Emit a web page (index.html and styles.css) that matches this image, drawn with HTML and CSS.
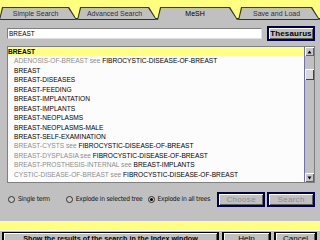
FILE: index.html
```html
<!DOCTYPE html>
<html lang="en">
<head>
  <meta charset="UTF-8">
  <title>MeSH</title>
  <link rel="stylesheet" href="styles.css">
</head>
<body>
  <div class="tabbar">
    <div class="tab t1"><div class="face">Simple Search</div></div>
    <div class="tab t2"><div class="face">Advanced Search</div></div>
    <div class="tab t3 active"><div class="face">MeSH</div></div>
    <div class="tab t4"><div class="face">Save and Load</div></div>
  </div>

  <div class="panel">
    <div class="query">
      <div class="field">BREAST</div>
      <button class="btn thes">Thesaurus</button>
    </div>

    <div class="listbox">
      <div class="rows">
        <div class="row hit">BREAST</div>
        <div class="row"><span class="dim">ADENOSIS-OF-BREAST see</span> FIBROCYSTIC-DISEASE-OF-BREAST</div>
        <div class="row">BREAST</div>
        <div class="row">BREAST-DISEASES</div>
        <div class="row">BREAST-FEEDING</div>
        <div class="row">BREAST-IMPLANTATION</div>
        <div class="row">BREAST-IMPLANTS</div>
        <div class="row">BREAST-NEOPLASMS</div>
        <div class="row">BREAST-NEOPLASMS-MALE</div>
        <div class="row">BREAST-SELF-EXAMINATION</div>
        <div class="row"><span class="dim">BREAST-CYSTS see</span> FIBROCYSTIC-DISEASE-OF-BREAST</div>
        <div class="row"><span class="dim">BREAST-DYSPLASIA see</span> FIBROCYSTIC-DISEASE-OF-BREAST</div>
        <div class="row"><span class="dim">BREAST-PROSTHESIS-INTERNAL see</span> BREAST-IMPLANTS</div>
        <div class="row"><span class="dim">CYSTIC-DISEASE-OF-BREAST see</span> FIBROCYSTIC-DISEASE-OF-BREAST</div>
      </div>
      <div class="scroll">
        <div class="arrow"><svg width="5" height="4" viewBox="0 0 5 4"><path d="M2.5 0.5 L4.5 3.5 L0.5 3.5 Z" fill="#000"/></svg></div>
        <div class="track"><div class="thumb"></div></div>
        <div class="arrow"><svg width="5" height="4" viewBox="0 0 5 4"><path d="M0.5 0.5 L4.5 0.5 L2.5 3.5 Z" fill="#000"/></svg></div>
      </div>
    </div>

    <div class="options">
      <label class="opt o1"><span class="radio"></span>Single term</label>
      <label class="opt o2"><span class="radio"></span>Explode in selected tree</label>
      <label class="opt o3"><span class="radio on"></span>Explode in all trees</label>
      <button class="btn off choose">Choose</button>
      <button class="btn off">Search</button>
    </div>
  </div>

  <div class="status"></div>

  <div class="footer">
    <button class="btn wide">Show the results of the search in the Index window</button>
    <button class="btn help">Help</button>
    <button class="btn cancel">Cancel</button>
  </div>
</body>
</html>
```

FILE: styles.css
```css
* {
  box-sizing: border-box;
}

body {
  margin: 0;
  width: 320px;
  height: 240px;
  overflow: hidden;
  background: #c0c0c0;
  font-family: 'Liberation Sans', Arial, sans-serif;
  color: #000;
}

/* tab strip */
.tabbar {
  display: flex;
  height: 19px;
  padding-top: 7px;
  background: #ffff80;
  border-bottom: 1px solid #303030;
}

.tab {
  height: 13px;
  background: #303030;
  padding: 1px 1px 0 1px;
  clip-path: polygon(0 100%, 3px 0, calc(100% - 8px) 0, 100% 100%);
  margin-bottom: -1px;
}

.tab .face {
  height: 100%;
  background: #c0c0c0;
  clip-path: polygon(0 100%, 3px 0, calc(100% - 8px) 0, 100% 100%);
  font-size: 7px;
  line-height: 11px;
  text-align: center;
  padding-right: 5px;
  color: #303030;
  border-bottom: 1px solid #303030;
}

.tab.active .face {
  border-bottom: none;
  color: #000;
}

.t1 { width: 80px; margin-left: -1px; }
.t2 { width: 82px; }
.t3 { width: 83px; }
.t4 { width: 84px; }

/* main panel */
.panel {
  padding: 0 5px 0 7px;
}

.query {
  display: flex;
  align-items: center;
  gap: 5px;
  height: 26px;
  padding-top: 2px;
}

.field {
  flex: 1;
  height: 11px;
  background: #fff;
  border: 1px solid #808080;
  border-right-color: #e0e0e0;
  border-bottom-color: #e0e0e0;
  font-size: 6.4px;
  line-height: 9px;
  padding-left: 1px;
}

.btn {
  font-family: 'Liberation Sans', Arial, sans-serif;
  background: #c0c0c0;
  border: 1px solid #000040;
  box-shadow: inset 1px 1px 0 #fff, inset -1px -1px 0 #606060;
  padding: 0;
  margin: 0;
  font-size: 8px;
  color: #000;
}

.thes {
  width: 48px;
  height: 15px;
  font-weight: bold;
  border: 2px solid #000050;
  letter-spacing: 0.1px;
}

/* list */
.listbox {
  display: flex;
  height: 137px;
  margin-top: 1px;
  border: 1px solid #808080;
  background: #fcfcfc;
}

.rows {
  flex: 1;
  font-size: 6.6px;
}

.row {
  height: 9.45px;
  line-height: 9.45px;
  padding-left: 6px;
  white-space: nowrap;
  overflow: hidden;
}

.row.hit {
  background: #ffff80;
  font-weight: bold;
  padding-left: 0;
}

.dim {
  color: #8c8c8c;
}

.scroll {
  width: 10px;
  display: flex;
  flex-direction: column;
  background: #c0c0c0;
  border-left: 1px solid #7070b0;
}

.arrow {
  height: 9px;
  display: flex;
  align-items: center;
  justify-content: center;
  background: #c8c8c8;
  box-shadow: inset 1px 1px 0 #fff, inset -1px -1px 0 #606060;
}

.track {
  flex: 1;
  padding-top: 13px;
}

.thumb {
  height: 11px;
  background: #d8d8d8;
  box-shadow: inset 1px 1px 0 #fff, inset -1px -1px 0 #404040;
}

/* options */
.options {
  display: flex;
  align-items: center;
  height: 31px;
  padding-top: 1px;
  font-size: 6.7px;
  font-family: 'DejaVu Sans Condensed', 'Liberation Sans', sans-serif;
  letter-spacing: -0.25px;
}

.opt {
  display: flex;
  align-items: center;
  gap: 3px;
  color: #101010;
}

.o1 { margin-left: 1px; width: 58px; }
.o2 { width: 82px; }
.o3 { width: 70px; }

.radio {
  flex: none;
  width: 7px;
  height: 7px;
  border-radius: 50%;
  border: 1px solid #303030;
  background: #c8c8c8;
  display: flex;
  align-items: center;
  justify-content: center;
}

.radio.on::after {
  content: "";
  width: 3px;
  height: 3px;
  border-radius: 50%;
  background: #000;
}

.btn.off {
  width: 48px;
  height: 15px;
  border: 2px solid #000050;
  color: #8e8e8e;
  letter-spacing: 0.3px;
}

.choose {
  margin-right: 2px;
}

/* status + footer */
.status {
  height: 10px;
  margin-top: 7px;
  background: #ffff80;
  border-bottom: 1px solid #fff;
}

.footer {
  display: flex;
  gap: 3px;
  padding: 1px 3px 0 2px;
}

.footer .btn {
  height: 14px;
  border: 2px solid #000;
  border-top: 1px solid #000;
  line-height: 10px;
  text-align: center;
}

.wide {
  width: 217px;
  font-weight: bold;
  font-size: 7.2px;
}

.help { width: 49px; }
.cancel { width: 43px; }
```
